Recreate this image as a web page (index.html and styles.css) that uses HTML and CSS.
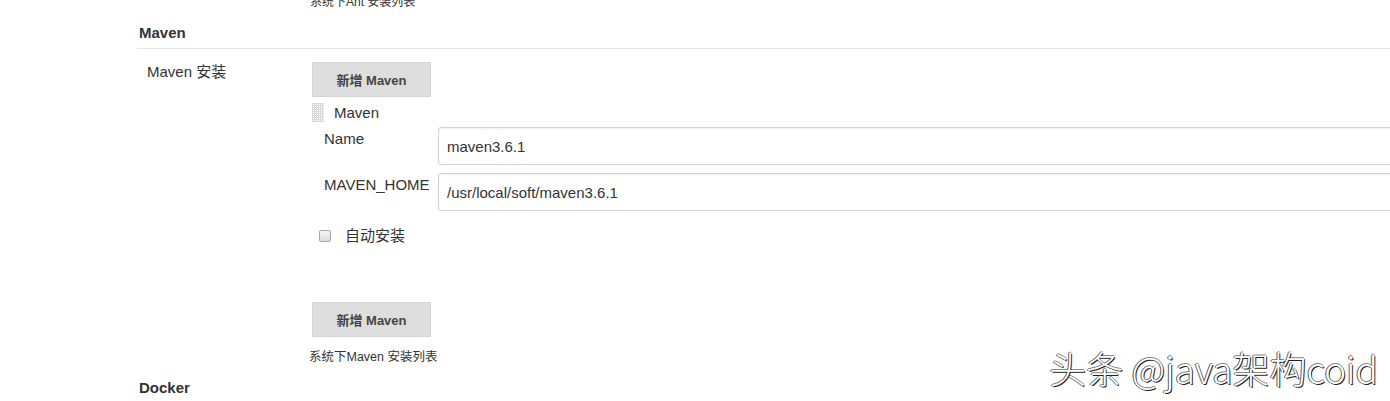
FILE: index.html
```html
<!DOCTYPE html>
<html lang="zh-CN">
<head>
<meta charset="utf-8">
<title>Maven</title>
<link rel="stylesheet" href="styles.css">
</head>
<body>
<div class="page">
  <div class="prev-desc">系统下Ant 安装列表</div>
  <div class="section-title">Maven</div>
  <div class="row">
    <div class="row-label">Maven 安装</div>
    <div class="row-body">
      <button class="btn">新增 Maven</button>
      <div class="item">
        <div class="item-head"><span class="handle"></span><span class="item-name">Maven</span></div>
        <div class="fields">
          <div class="field-label">Name</div>
          <div class="field-input"><input class="text" type="text" value="maven3.6.1"></div>
          <div class="field-label">MAVEN_HOME</div>
          <div class="field-input"><input class="text" type="text" value="/usr/local/soft/maven3.6.1"></div>
        </div>
        <label class="check"><span class="box"></span><span>自动安装</span></label>
      </div>
      <button class="btn btn-bottom">新增 Maven</button>
      <div class="desc">系统下Maven 安装列表</div>
    </div>
  </div>
  <div class="section-title docker">Docker</div>
</div>
<div class="watermark">头条 @java架构coid</div>
</body>
</html>
```
FILE: styles.css
```css
html, body {
  margin: 0;
  padding: 0;
  background: #fff;
  overflow: hidden;
}
body {
  width: 1390px;
  height: 401px;
  position: relative;
  font-family: "Liberation Sans", Arial, "Noto Sans CJK SC", sans-serif;
  font-size: 15px;
  color: #333;
}
.page {
  padding-left: 137px;
  margin-right: -30px;
}
.prev-desc {
  margin-top: -5px;
  margin-left: 173px;
  font-size: 12px;
  line-height: 14px;
  color: #333;
}
.section-title {
  margin-top: 14px;
  padding: 0 2px 5px;
  font-weight: bold;
  font-size: 15px;
  line-height: 20px;
  color: #333;
  border-bottom: 1px solid #e3e3e3;
}
.section-title.docker {
  margin-top: 13px;
  border-bottom: none;
}
.row {
  display: flex;
  padding-top: 13px;
}
.row-label {
  width: 165px;
  padding-left: 10px;
  line-height: 20px;
  flex-shrink: 0;
}
.row-body {
  flex: 1;
  display: flex;
  flex-direction: column;
  align-items: flex-start;
}
.btn {
  width: 119px;
  height: 35px;
  padding: 0;
  background: #dedede;
  border: 1px solid #d4d4d4;
  color: #444;
  font-family: "Liberation Sans", Arial, "Noto Sans CJK SC", sans-serif;
  font-weight: bold;
  font-size: 13px;
}
.item {
  align-self: stretch;
}
.item-head {
  display: flex;
  align-items: center;
  margin-top: 6px;
  height: 19px;
}
.handle {
  width: 12px;
  height: 19px;
  background-image:
    linear-gradient(90deg, #d8d8d8 1px, transparent 1px),
    linear-gradient(#d8d8d8 1px, transparent 1px);
  background-size: 2px 2px;
}
.item-name {
  margin-left: 10px;
  line-height: 19px;
}
.fields {
  display: grid;
  grid-template-columns: 114px 1fr;
  row-gap: 8px;
  margin-top: 5px;
  padding-left: 12px;
}
.field-label {
  line-height: 20px;
  padding-top: 2px;
  white-space: nowrap;
}
.field-input {
  display: flex;
}
.text {
  flex: 1;
  height: 38px;
  box-sizing: border-box;
  border: 1px solid #d2d2d2;
  border-radius: 3px;
  box-shadow: inset 0 1px 2px rgba(0,0,0,0.06);
  padding: 0 8px;
  font-family: "Liberation Sans", Arial, "Noto Sans CJK SC", sans-serif;
  font-size: 15px;
  color: #333;
  outline: none;
}
.check {
  display: flex;
  align-items: center;
  margin-top: 15px;
  padding-left: 7px;
  line-height: 20px;
}
.box {
  width: 10px;
  height: 10px;
  border: 1px solid #a9a9a9;
  border-radius: 2px;
  background: linear-gradient(#f4f4f4, #dcdcdc);
  margin-right: 14px;
}
.btn-bottom {
  margin-top: 56px;
}
.desc {
  margin-top: 13px;
  margin-left: -3px;
  font-size: 12.5px;
  line-height: 15px;
}
.watermark {
  position: absolute;
  right: 12px;
  top: 344px;
  font-family: "Noto Sans CJK SC", sans-serif;
  font-weight: 300;
  font-size: 37px;
  line-height: 48px;
  color: #fff;
  text-shadow: 1px 1px 0 #222, -1px 0 0 #555, 0 -1px 0 #888;
  white-space: nowrap;
}
```
